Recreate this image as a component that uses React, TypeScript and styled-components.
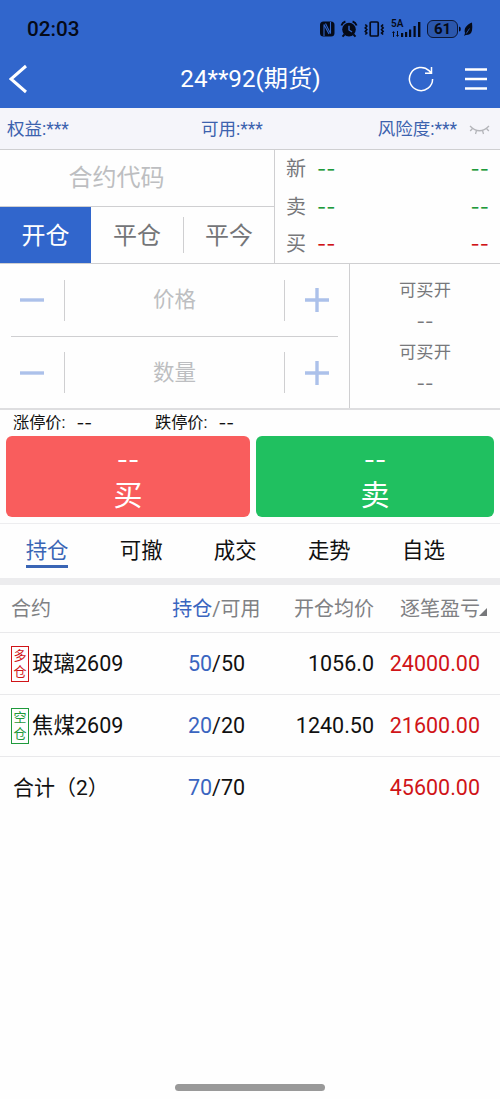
import React from 'react';
import styled, { createGlobalStyle } from 'styled-components';

const blue = '#3166cc';
const line = '#cfcfd1';
const red = '#d01418';
const green = '#1f9a3c';

const GlobalStyle = createGlobalStyle`
  * { box-sizing: border-box; }
  body { margin: 0; background: #fff; }
`;

const Screen = styled.div`
  width: 500px;
  height: 1099px;
  display: flex;
  flex-direction: column;
  overflow: hidden;
  background: #fefefe;
  color: #111;
  font-family: Roboto, 'Noto Sans CJK SC', sans-serif;
  line-height: 1;
  white-space: nowrap;
`;

const Header = styled.header`
  height: 108px;
  flex: none;
  background: ${blue};
`;

const StatusBar = styled.div`
  height: 56px;
  padding: 2px 26px 0 27px;
  display: flex;
  align-items: center;
  justify-content: space-between;
  color: #050a18;
`;

const Clock = styled.span`
  font-size: 20.7px;
  font-weight: 500;
`;

const StatusIcons = styled.div`
  display: flex;
  align-items: center;
`;

const Signal = styled.div`
  position: relative;
  width: 30px;
  height: 18px;
  margin-left: 6px;
`;

const NetworkLabel = styled.span`
  position: absolute;
  left: 0;
  top: -1px;
  font-size: 10px;
  font-weight: 600;
`;

const Battery = styled.div`
  width: 31px;
  height: 18px;
  margin-left: 6px;
  border: 1.5px solid #0b1736;
  border-radius: 6px;
  display: flex;
  align-items: center;
  justify-content: center;
  background: #2b57ad;
  font-size: 15px;
  font-weight: 700;
`;

const NavBar = styled.div`
  height: 46px;
  padding: 0 13px 0 9px;
  display: grid;
  grid-template-columns: 80px 1fr 80px;
  align-items: center;
  color: #fff;
`;

const Title = styled.h1`
  margin: 0;
  padding-left: 5px;
  font-size: 24.2px;
  font-weight: 400;
  text-align: center;
`;

const NavActions = styled.div`
  display: flex;
  align-items: center;
  justify-content: space-between;
  padding-left: 1px;
`;

const AccountBar = styled.div`
  height: 42px;
  flex: none;
  padding: 2px 10px 0 7px;
  display: grid;
  grid-template-columns: 194px auto 1fr;
  align-items: center;
  border-bottom: 1px solid ${line};
  background: #f5f5fa;
  color: #3c62ae;
  font-size: 17.5px;
`;

const Risk = styled.div`
  display: flex;
  justify-content: flex-end;
  align-items: center;
  gap: 12px;
`;

const Upper = styled.section`
  height: 114px;
  flex: none;
  display: grid;
  grid-template-columns: 275px 1fr;
  border-bottom: 1px solid ${line};
`;

const ContractPane = styled.div`
  display: flex;
  flex-direction: column;
  border-right: 1px solid ${line};
`;

const CodeField = styled.div`
  height: 57px;
  padding-right: 41px;
  border-bottom: 1px solid ${line};
  display: flex;
  align-items: center;
  justify-content: center;
  color: #bdbec1;
  font-size: 24px;
`;

const ModeTabs = styled.div`
  flex: 1;
  display: grid;
  grid-template-columns: 91px 93px 90px;
  align-items: center;
`;

const ModeTab = styled.div<{ $active?: boolean; $split?: boolean }>`
  height: ${p => (p.$active ? '100%' : '36px')};
  padding-top: ${p => (p.$active ? '1px' : '2px')};
  display: flex;
  align-items: center;
  justify-content: center;
  background: ${p => (p.$active ? blue : 'transparent')};
  color: ${p => (p.$active ? '#fff' : '#747578')};
  border-right: ${p => (p.$split ? `1px solid ${line}` : '0')};
  font-size: 24px;
`;

const Quotes = styled.div`
  padding: 0 11px;
  display: grid;
  grid-template-rows: 38px 37px 38px;
`;

const QuoteRow = styled.div`
  display: grid;
  grid-template-columns: 31px 1fr auto;
  align-items: center;
  color: #77787b;
  font-size: 20px;
`;

const Dashes = styled.span<{ $size: number; $color?: string; $weight?: number }>`
  font-family: Inter, sans-serif;
  font-size: ${p => p.$size}px;
  font-weight: ${p => p.$weight ?? 400};
  color: ${p => p.$color ?? 'inherit'};
  font-feature-settings: 'calt' 0;
`;

const Entry = styled.section`
  height: 146px;
  flex: none;
  display: grid;
  grid-template-columns: 350px 1fr;
  border-bottom: 2px solid #dedee0;
`;

const Steppers = styled.div`
  padding: 0 11px;
  border-right: 1px solid ${line};
`;

const Stepper = styled.div<{ $first?: boolean }>`
  height: ${p => (p.$first ? 73 : 71)}px;
  display: grid;
  grid-template-columns: 53px 1fr 53px;
  align-items: center;
  border-bottom: ${p => (p.$first ? `1px solid ${line}` : '0')};
`;

const StepValue = styled.div`
  height: 41px;
  display: flex;
  align-items: center;
  justify-content: center;
  border: solid ${line};
  border-width: 0 1px;
  color: #bdbec1;
  font-size: 21.5px;
`;

const StepIcon = styled.svg`
  width: 24px;
  height: 24px;
  justify-self: end;
  stroke: #acc1ea;
  stroke-width: 3.4;
`;

const MinusIcon = styled(StepIcon)`
  justify-self: start;
  margin-left: 9px;
`;

const PlusIcon = styled(StepIcon)`
  margin-right: 9px;
`;

const Limits = styled.div`
  padding-top: 11px;
  display: flex;
  flex-direction: column;
  align-items: center;
  color: #77787b;
  font-size: 17.3px;
`;

const LimitLine = styled.div`
  height: 31px;
  display: flex;
  align-items: center;
`;

const LimitDashes = styled(Dashes)`
  margin-top: -1px;
`;

const PriceLimits = styled.div`
  height: 26px;
  flex: none;
  padding: 1px 0 0 13px;
  display: grid;
  grid-template-columns: 142px 1fr;
  align-items: center;
  font-size: 16.2px;
`;

const PriceLimit = styled.div`
  display: flex;
  align-items: center;
  gap: 11px;
`;

const OrderButtons = styled.div`
  height: 87px;
  flex: none;
  padding: 0 6px;
  display: grid;
  grid-template-columns: 244px 238px;
  gap: 6px;
`;

const OrderButton = styled.button<{ $bg: string }>`
  height: 81px;
  margin: 0;
  padding: 12px 0 0;
  border: 0;
  border-radius: 6px;
  background: ${p => p.$bg};
  color: #fff;
  font: inherit;
  font-size: 29px;
  display: flex;
  flex-direction: column;
  align-items: center;
  gap: 9px;
`;

const Tabs = styled.nav`
  height: 55px;
  flex: none;
  border-top: 1px solid #ededef;
  display: flex;
`;

const Tab = styled.div<{ $active?: boolean }>`
  width: 94.1px;
  display: flex;
  justify-content: center;
  color: ${p => (p.$active ? '#3a65b5' : '#111')};
  font-size: 21.4px;

  span {
    height: 44px;
    display: flex;
    align-items: center;
    padding-top: 13px;
    border-bottom: 3px solid ${p => (p.$active ? '#3a65b5' : 'transparent')};
  }
`;

const Band = styled.div`
  height: 7px;
  flex: none;
  background: #ececee;
`;

const Row = styled.div<{ $head?: boolean; $last?: boolean }>`
  height: ${p => (p.$head ? 48 : 62)}px;
  flex: none;
  padding-left: 11px;
  display: grid;
  grid-template-columns: 146px 118px 99px 106px 20px;
  align-items: center;
  border-bottom: ${p => (p.$last ? '0' : '1px solid #e9e9eb')};
  color: ${p => (p.$head ? '#808184' : '#111')};
  font-size: ${p => (p.$head ? 20 : 21.5)}px;
`;

const NameCell = styled.div`
  display: flex;
  align-items: center;
  gap: 3px;
`;

const TotalLabel = styled.span`
  padding-left: 2px;
  font-size: 21px;
`;

const Tag = styled.span<{ $color: string }>`
  width: 18px;
  height: 36px;
  border: 1px solid ${p => p.$color};
  color: ${p => p.$color};
  font-size: 13px;
  line-height: 16px;
  display: flex;
  flex-direction: column;
  align-items: center;
  justify-content: center;
`;

const CenterCell = styled.div`
  padding-left: 1px;
  text-align: center;
`;

const EndCell = styled.div<{ $color?: string }>`
  text-align: right;
  color: ${p => p.$color ?? 'inherit'};
`;

const Accent = styled.span`
  color: #3a65c0;
`;

const SortMark = styled.svg`
  width: 8px;
  height: 8px;
  margin: 6px 0 0 -1px;
`;

const HomeIndicator = styled.div`
  width: 150px;
  height: 7px;
  margin: auto auto 8px;
  border-radius: 4px;
  background: #999;
`;

const positions = [
  { tag: ['多', '仓'], color: red, name: '玻璃2609', held: 50, free: 50, price: '1056.0', profit: '24000.00' },
  { tag: ['空', '仓'], color: green, name: '焦煤2609', held: 20, free: 20, price: '1240.50', profit: '21600.00' },
];

const quotes = [
  { label: '新', color: green },
  { label: '卖', color: green },
  { label: '买', color: red },
];

export default function App() {
  return (
    <>
      <GlobalStyle />
      <Screen>
        <Header>
          <StatusBar>
            <Clock>02:03</Clock>
            <StatusIcons>
              <svg width="66" height="18" viewBox="0 0 66 18" fill="none" stroke="#050a18">
                <rect x="1" y="1.500" width="14.500" height="15" rx="3.500" fill="#050a18" stroke="none" />
                <path d="M5 16V4.500L10 14M6.500 3.500L11.500 13.500V2" stroke="#3166cc" strokeWidth="1.100" />
                <circle cx="30" cy="9.6" r="6.8" fill="#050a18" stroke="none" />
                <path d="M22.4 5.5q1-3 4-4M37.6 5.5q-1-3-4-4M25.5 14.5l-2 2.2M34.5 14.5l2 2.2" strokeWidth="1.9" />
                <path d="M30 5.8v4.2l3 2" stroke="#3166cc" strokeWidth="1.4" />
                <rect x="51.2" y="2" width="8" height="14" rx="1" strokeWidth="1.7" />
                <path d="M46.300 4.500l1.500 1.500-1.500 2 1.500 1.500-1.500 2 1.500 1.500-1.500 1.500M64.100 4.500l-1.500 1.500 1.500 2-1.500 1.500 1.500 2-1.500 1.500 1.500 1.500" strokeWidth="1.700" />
              </svg>
              <Signal>
                <NetworkLabel>5A</NetworkLabel>
                <svg width="30" height="18" viewBox="0 0 30 18">
                  <path d="M10 13h2.2v4H10zM14 12h2.2v5H14zM18 9.500h2.200v7.500H18zM22.500 6h2.200v11h-2.200zM27 2h2.400v15H27zM1 13l1.500-2L4 13H3v4H2v-4zM6 11v4H5l1.500 2L8 15H7v-4z" fill="#050a18" />
                </svg>
              </Signal>
              <Battery>61</Battery>
              <svg width="16" height="18" viewBox="0 0 16 18">
                <path d="M1 6.500q1.800 0 1.800 2.500T1 11.500z" fill="#050a18" />
                <path d="M14 2.500C9 4.500 5.500 8 7 13L6.200 16l1.500-1q5.500 0 6.300-4.500.5-4 0-8z" fill="#050a18" />
                <path d="M8.300 13.500l3.200-5" stroke="#3166cc" strokeWidth=".8" />
              </svg>
            </StatusIcons>
          </StatusBar>
          <NavBar>
            <svg width="20" height="30" viewBox="0 0 20 30" fill="none" stroke="#fff" strokeWidth="3">
              <path d="M17 2L2 15 17 28" />
            </svg>
            <Title>24**92(期货)</Title>
            <NavActions>
              <svg width="26" height="26" viewBox="0 0 26 26" fill="none" stroke="#fff" strokeWidth="1.500">
                <path d="M24.600 13A11.600 11.600 0 1 1 21 4.600l2 2M23.500 1v6.300h-6.500" />
              </svg>
              <svg width="22" height="24" viewBox="0 0 22 24" stroke="#fff" strokeWidth="2.700">
                <path d="M0 2.500h22M0 12h22M0 21.500h22" />
              </svg>
            </NavActions>
          </NavBar>
        </Header>

        <AccountBar>
          <span>权益:***</span>
          <span>可用:***</span>
          <Risk>
            <span>风险度:***</span>
            <svg width="21" height="10" viewBox="0 0 21 10" fill="none" stroke="#b4b5ba" strokeWidth="1.300">
              <path d="M1 1q9.500 9.500 19 0M3.500 3.500L1.200 6M7.500 5.500L6.500 9M13.500 5.500l1 3.500M17.500 3.500L19.800 6" />
            </svg>
          </Risk>
        </AccountBar>

        <Upper>
          <ContractPane>
            <CodeField>合约代码</CodeField>
            <ModeTabs>
              <ModeTab $active>开仓</ModeTab>
              <ModeTab $split>平仓</ModeTab>
              <ModeTab>平今</ModeTab>
            </ModeTabs>
          </ContractPane>
          <Quotes>
            {quotes.map(q => (
              <QuoteRow key={q.label}>
                <span>{q.label}</span>
                <Dashes $size={20} $color={q.color}>--</Dashes>
                <Dashes $size={20} $color={q.color}>--</Dashes>
              </QuoteRow>
            ))}
          </Quotes>
        </Upper>

        <Entry>
          <Steppers>
            {['价格', '数量'].map((label, i) => (
              <Stepper key={label} $first={i === 0}>
                <MinusIcon viewBox="0 0 24 24"><path d="M0 12h24" /></MinusIcon>
                <StepValue>{label}</StepValue>
                <PlusIcon viewBox="0 0 24 24"><path d="M0 12h24M12 0v24" /></PlusIcon>
              </Stepper>
            ))}
          </Steppers>
          <Limits>
            <LimitLine>可买开</LimitLine>
            <LimitLine><LimitDashes $size={18.5}>--</LimitDashes></LimitLine>
            <LimitLine>可买开</LimitLine>
            <LimitLine><LimitDashes $size={18.5}>--</LimitDashes></LimitLine>
          </Limits>
        </Entry>

        <PriceLimits>
          <PriceLimit>涨停价: <Dashes $size={17}>--</Dashes></PriceLimit>
          <PriceLimit>跌停价: <Dashes $size={17}>--</Dashes></PriceLimit>
        </PriceLimits>

        <OrderButtons>
          <OrderButton $bg="#f95d5d"><Dashes $size={24.5}>--</Dashes>买</OrderButton>
          <OrderButton $bg="#20c060"><Dashes $size={24.5}>--</Dashes>卖</OrderButton>
        </OrderButtons>

        <Tabs>
          {['持仓', '可撤', '成交', '走势', '自选'].map((label, i) => (
            <Tab key={label} $active={i === 0}><span>{label}</span></Tab>
          ))}
        </Tabs>
        <Band />

        <Row $head>
          <span>合约</span>
          <CenterCell><Accent>持仓</Accent>/可用</CenterCell>
          <EndCell>开仓均价</EndCell>
          <EndCell>逐笔盈亏</EndCell>
          <SortMark viewBox="0 0 8 8"><path d="M8 0v8H0z" fill="#77787b" /></SortMark>
        </Row>
        {positions.map(p => (
          <Row key={p.name}>
            <NameCell>
              <Tag $color={p.color}>{p.tag.map(c => <span key={c}>{c}</span>)}</Tag>
              {p.name}
            </NameCell>
            <CenterCell><Accent>{p.held}</Accent>/{p.free}</CenterCell>
            <EndCell>{p.price}</EndCell>
            <EndCell $color={red}>{p.profit}</EndCell>
          </Row>
        ))}
        <Row $last>
          <TotalLabel>合计（2）</TotalLabel>
          <CenterCell><Accent>70</Accent>/70</CenterCell>
          <span />
          <EndCell $color={red}>45600.00</EndCell>
        </Row>
        <HomeIndicator />
      </Screen>
    </>
  );
}
